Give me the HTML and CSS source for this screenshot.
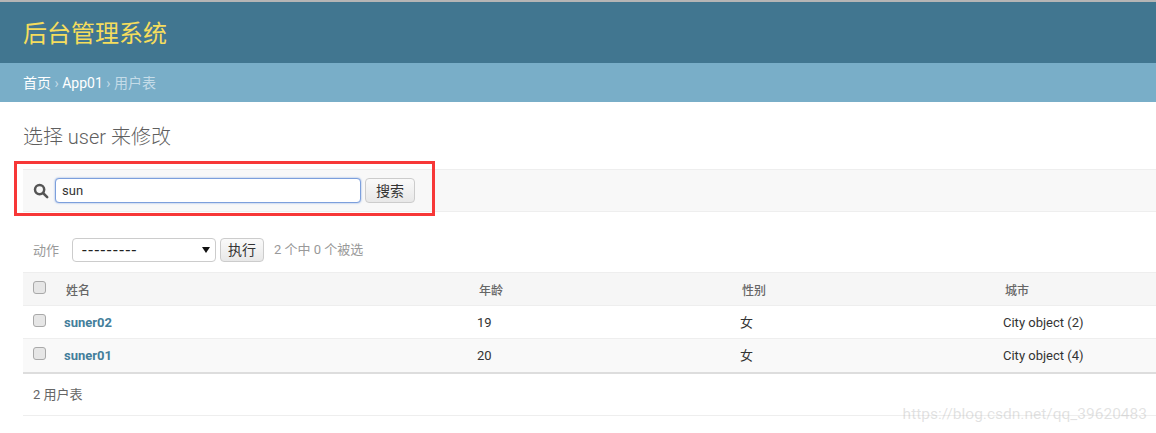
FILE: index.html
```html
<!DOCTYPE html>
<html lang="zh">
<head>
<meta charset="utf-8">
<title>选择 user 来修改</title>
<link rel="stylesheet" href="styles.css">
</head>
<body>
<header class="header"><h1 class="brand">后台管理系统</h1></header>
<nav class="crumbs"><a href="#">首页</a> › <a href="#">App01</a> › 用户表</nav>
<main class="content">
  <h2 class="title">选择 user 来修改</h2>
  <div class="toolbar">
    <svg class="search-icon" viewBox="0 0 16 16" aria-hidden="true"><circle cx="6.6" cy="6.6" r="4.6"/><path d="M10 10l4.2 4.2"/></svg>
    <input class="search-input" type="text" value="sun">
    <button class="btn search-btn">搜索</button>
  </div>
  <div class="actions">
    <span class="action-label">动作</span>
    <div class="select"><span class="select-value">---------</span><span class="select-arrow"></span></div>
    <button class="btn run-btn">执行</button>
    <span class="counter">2 个中 0 个被选</span>
  </div>
  <table class="results">
    <thead>
      <tr><th class="c-check"><input type="checkbox"></th><th class="c-name"><span class="th-name">姓名</span></th><th class="c-age">年龄</th><th class="c-sex">性别</th><th>城市</th></tr>
    </thead>
    <tbody>
      <tr><td class="c-check"><input type="checkbox"></td><td class="c-name"><a href="#">suner02</a></td><td>19</td><td class="cjk">女</td><td>City object (2)</td></tr>
      <tr class="alt"><td class="c-check"><input type="checkbox"></td><td class="c-name"><a href="#">suner01</a></td><td>20</td><td class="cjk">女</td><td>City object (4)</td></tr>
    </tbody>
  </table>
  <p class="paginator">2 用户表</p>
</main>
<div class="highlight"></div>
<div class="watermark">https://blog.csdn.net/qq_39620483</div>
</body>
</html>
```
FILE: styles.css
```css
* { box-sizing: border-box; }
html, body { margin: 0; padding: 0; height: 433px; overflow: hidden; }
body {
  position: relative;
  background: #fff;
  color: #333;
  font-family: Roboto, "Noto Sans CJK SC", sans-serif;
  font-size: 13px;
  border-top: 2px solid #b5b5b5;
}
.header {
  height: 61px;
  background: #417690;
  padding: 2px 23px 0;
  display: flex;
  align-items: center;
}
.brand { margin: 0; color: #f5dd5d; font-size: 24px; font-weight: 400; line-height: 1; }
.crumbs {
  height: 39px;
  line-height: 41px;
  padding: 0 23px;
  background: #79aec8;
  color: #c4dce8;
  font-size: 14px;
}
.crumbs a { color: #fff; text-decoration: none; }
.content { padding: 0 0 0 23px; }
.title {
  margin: 0;
  height: 67px;
  padding-top: 22px;
  font-size: 20px;
  line-height: 26px;
  font-weight: 300;
  color: #5f5f5f;
}
.toolbar {
  height: 43px;
  background: #f8f8f8;
  border-top: 1px solid #eee;
  border-bottom: 1px solid #eee;
  display: flex;
  align-items: center;
  padding-left: 10px;
}
.search-icon { width: 16px; height: 16px; margin-right: 6px; fill: none; stroke: #555; stroke-width: 2.5; stroke-linecap: round; }
.search-input {
  width: 306px;
  height: 25px;
  padding: 0 6px;
  border: 1px solid #7c9fdc;
  border-radius: 4px;
  box-shadow: 0 0 2px #7c9fdc;
  font: 13px Roboto, sans-serif;
  color: #333;
  outline: none;
}
.btn {
  height: 25px;
  border: 1px solid #ccc;
  border-radius: 4px;
  background: linear-gradient(#fafafa, #e8e8e8);
  color: #333;
  font: 14px/20px "Noto Sans CJK SC", sans-serif;
  padding: 0 0 2px;
}
.search-btn { width: 50px; margin-left: 4px; }
.actions {
  height: 60px;
  display: flex;
  align-items: center;
  padding-left: 10px;
  padding-top: 16px;
}
.action-label { color: #999; width: 39px; padding-bottom: 2px; }
.select {
  width: 144px;
  height: 24px;
  border: 1px solid #ccc;
  border-radius: 4px;
  display: flex;
  align-items: center;
  justify-content: space-between;
  padding: 0 5px 0 9px;
  background: #fff;
  color: #222;
}
.select-value { font-size: 17px; line-height: 1; letter-spacing: 1.5px; }
.select-arrow { border: 4px solid transparent; border-top: 6px solid #111; border-bottom: 0; }
.run-btn { width: 44px; height: 24px; margin-left: 4px; }
.counter { color: #999; margin-left: 10px; padding-bottom: 4px; }
.results { width: 100%; border-collapse: collapse; table-layout: fixed; border-bottom: 2px solid #ddd; }
.results th {
  height: 33px;
  background: #f6f6f6;
  border-top: 1px solid #eee;
  border-bottom: 1px solid #eee;
  padding: 0 0 0 2px;
  text-align: left;
  color: #666;
  font-size: 12px;
  font-weight: 500;
}
.results td {
  height: 33px;
  border-bottom: 1px solid #eee;
  padding: 0;
  color: #333;
}
.results td.cjk { padding-bottom: 2px; }
.alt td { background: #f9f9f9; }
.results .alt td { height: 34px; }
.results input {
  appearance: none;
  margin: 0 0 4px 10px;
  width: 13px;
  height: 13px;
  display: block;
  background: #e6e6e6;
  border: 1px solid #a9a9a9;
  border-radius: 3px;
}
.results .c-check { width: 41px; padding-left: 0; }
.results .c-name { width: 413px; }
.results .c-age { width: 263px; }
.results .c-sex { width: 263px; }
.results td.c-name a { color: #447e9b; font-weight: 700; text-decoration: none; }
.th-name { margin-left: 0; }
.paginator {
  margin: 0;
  height: 42px;
  line-height: 42px;
  padding-left: 10px;
  color: #666;
  border-bottom: 1px solid #eee;
}
.highlight {
  position: absolute;
  left: 14px;
  top: 159px;
  width: 421px;
  height: 55px;
  border: 3px solid #f73737;
}
.watermark {
  position: absolute;
  right: 9px;
  top: 403px;
  font-size: 15.5px;
  color: rgba(170, 170, 170, .35);
}
```
